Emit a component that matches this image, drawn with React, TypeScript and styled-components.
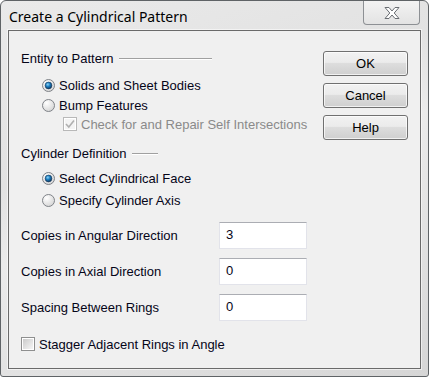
import styled, { createGlobalStyle } from 'styled-components';

const GlobalStyle = createGlobalStyle`
  html, body {
    margin: 0;
    padding: 0;
    background: #ffffff;
  }
`;

const Window = styled.div`
  box-sizing: border-box;
  width: 429px;
  height: 377px;
  border: 1px solid #5f6366;
  border-radius: 6px 6px 3px 3px;
  background: linear-gradient(160deg, #eaeaea 0%, #e2e2e2 35%, #ebebeb 50%, #d6d6d6 100%);
  padding: 0 7px 7px 7px;
  display: flex;
  flex-direction: column;
  font-family: "Liberation Sans", Arial, sans-serif;
`;

const TitleBar = styled.div`
  height: 29px;
  display: flex;
  align-items: flex-start;
  justify-content: space-between;
`;

const Title = styled.div`
  font-family: "Noto Sans", "Open Sans", sans-serif;
  font-size: 14px;
  color: #000000;
  padding: 7px 0 0 1px;
  line-height: 18px;
`;

const CloseButton = styled.div`
  box-sizing: border-box;
  width: 57px;
  height: 24px;
  margin-right: 1px;
  border: 1px solid #8d9094;
  border-top: none;
  border-radius: 0 0 4px 4px;
  background: linear-gradient(#f3f3f3, #e3e3e3);
  display: flex;
  align-items: center;
  justify-content: center;
`;

const Client = styled.div`
  flex: 1;
  display: flex;
  border: 1px solid #6a6a6a;
  background: #f0f0f0;
  box-shadow: 0 0 0 1px rgba(255, 255, 255, 0.55);
`;

const LeftPane = styled.div`
  flex: 1;
  padding: 19px 0 0 12px;
  display: flex;
  flex-direction: column;
  font-size: 13px;
  color: #050518;
`;

const RightPane = styled.div`
  width: 85px;
  margin-right: 12px;
  padding-top: 20px;
  display: flex;
  flex-direction: column;
  gap: 7px;
`;

const GroupHeader = styled.div<{ $mt?: number }>`
  height: 16px;
  display: flex;
  align-items: center;
  margin-top: ${(p) => p.$mt ?? 0}px;
`;

const HeaderLine = styled.div<{ $w: number }>`
  width: ${(p) => p.$w}px;
  height: 1px;
  margin-left: 5px;
  background: #a0a0a0;
  box-shadow: 0 1px 0 #ffffff;
`;

const OptionRow = styled.div<{ $indent: number; $mt?: number; $h?: number; $disabled?: boolean }>`
  height: ${(p) => p.$h ?? 20}px;
  margin-top: ${(p) => p.$mt ?? 0}px;
  padding-left: ${(p) => p.$indent}px;
  display: flex;
  align-items: center;
  gap: 4px;
  color: ${(p) => (p.$disabled ? '#8a8a8a' : 'inherit')};
`;

const FieldRow = styled.div<{ $mt: number }>`
  height: 27px;
  margin-top: ${(p) => p.$mt}px;
  display: flex;
  align-items: center;
`;

const FieldLabel = styled.div`
  width: 198px;
`;

const Input = styled.div`
  box-sizing: border-box;
  width: 88px;
  height: 27px;
  background: #ffffff;
  border: 1px solid #e2e3ea;
  border-top-color: #abadb3;
  padding: 4px 0 0 6px;
  font-size: 13px;
`;

const Button = styled.div`
  box-sizing: border-box;
  height: 25px;
  border: 1px solid #707070;
  border-radius: 3px;
  background: linear-gradient(#f2f2f2 0%, #ebebeb 45%, #dddddd 50%, #cfcfcf 100%);
  box-shadow: inset 0 0 0 1px rgba(255, 255, 255, 0.7);
  display: flex;
  align-items: center;
  justify-content: center;
  font-size: 13px;
  color: #000000;
`;

const CloseIcon = () => (
  <svg width="18" height="14" viewBox="0 0 18 14">
    <path
      d="M2 1.5 H6 L9 5 L12 1.5 H16 L11.2 7 L16 12.5 H12 L9 9 L6 12.5 H2 L6.8 7 Z"
      fill="#ffffff"
      stroke="#6a6e73"
      strokeWidth="1"
      strokeLinejoin="round"
    />
  </svg>
);

const Radio = ({ checked }: { checked?: boolean }) => (
  <svg width="13" height="13" viewBox="0 0 13 13">
    <defs>
      <radialGradient id="rbg" cx="0.35" cy="0.3" r="0.8">
        <stop offset="0" stopColor="#ffffff" />
        <stop offset="1" stopColor="#d2d2d2" />
      </radialGradient>
      <radialGradient id="rdot" cx="0.4" cy="0.35" r="0.7">
        <stop offset="0" stopColor="#8fd4f6" />
        <stop offset="0.45" stopColor="#1a7dc0" />
        <stop offset="1" stopColor="#0c2e52" />
      </radialGradient>
    </defs>
    <circle cx="6.5" cy="6.5" r="6" fill="url(#rbg)" stroke="#7f8388" strokeWidth="1" />
    {checked && <circle cx="6.5" cy="6.5" r="3.4" fill="url(#rdot)" stroke="#1b3a5c" strokeWidth="0.6" />}
  </svg>
);

const Check = ({ checked, disabled }: { checked?: boolean; disabled?: boolean }) => (
  <svg width="14" height="14" viewBox="0 0 14 14">
    <defs>
      <linearGradient id={disabled ? 'cbgd' : 'cbg'} x1="0" y1="0" x2="1" y2="1">
        <stop offset="0" stopColor={disabled ? '#f4f4f4' : '#cbcbcb'} />
        <stop offset="1" stopColor={disabled ? '#f4f4f4' : '#f6f6f6'} />
      </linearGradient>
    </defs>
    <rect x="0.5" y="0.5" width="13" height="13" fill="#ffffff" stroke={disabled ? '#b8b8b8' : '#8e8f8f'} />
    <rect x="2" y="2" width="10" height="10" fill={`url(#${disabled ? 'cbgd' : 'cbg'})`} />
    {checked && (
      <path d="M3 7 L5.8 10 L11 3.5" fill="none" stroke={disabled ? '#b0b0b0' : '#333'} strokeWidth="1.6" />
    )}
  </svg>
);

export default function App() {
  return (
    <>
      <GlobalStyle />
      <Window>
        <TitleBar>
          <Title>Create a Cylindrical Pattern</Title>
          <CloseButton>
            <CloseIcon />
          </CloseButton>
        </TitleBar>
        <Client>
          <LeftPane>
            <GroupHeader>
              Entity to Pattern
              <HeaderLine $w={93} />
            </GroupHeader>
            <OptionRow $indent={21} $mt={9}>
              <Radio checked />
              Solids and Sheet Bodies
            </OptionRow>
            <OptionRow $indent={21}>
              <Radio />
              Bump Features
            </OptionRow>
            <OptionRow $indent={42} $h={18} $disabled>
              <Check checked disabled />
              Check for and Repair Self Intersections
            </OptionRow>
            <GroupHeader $mt={12}>
              Cylinder Definition
              <HeaderLine $w={26} />
            </GroupHeader>
            <OptionRow $indent={21} $mt={7}>
              <Radio checked />
              Select Cylindrical Face
            </OptionRow>
            <OptionRow $indent={21} $mt={2}>
              <Radio />
              Specify Cylinder Axis
            </OptionRow>
            <FieldRow $mt={12}>
              <FieldLabel>Copies in Angular Direction</FieldLabel>
              <Input>3</Input>
            </FieldRow>
            <FieldRow $mt={9}>
              <FieldLabel>Copies in Axial Direction</FieldLabel>
              <Input>0</Input>
            </FieldRow>
            <FieldRow $mt={9}>
              <FieldLabel>Spacing Between Rings</FieldLabel>
              <Input>0</Input>
            </FieldRow>
            <OptionRow $indent={0} $mt={13}>
              <Check />
              Stagger Adjacent Rings in Angle
            </OptionRow>
          </LeftPane>
          <RightPane>
            <Button>OK</Button>
            <Button>Cancel</Button>
            <Button>Help</Button>
          </RightPane>
        </Client>
      </Window>
    </>
  );
}
